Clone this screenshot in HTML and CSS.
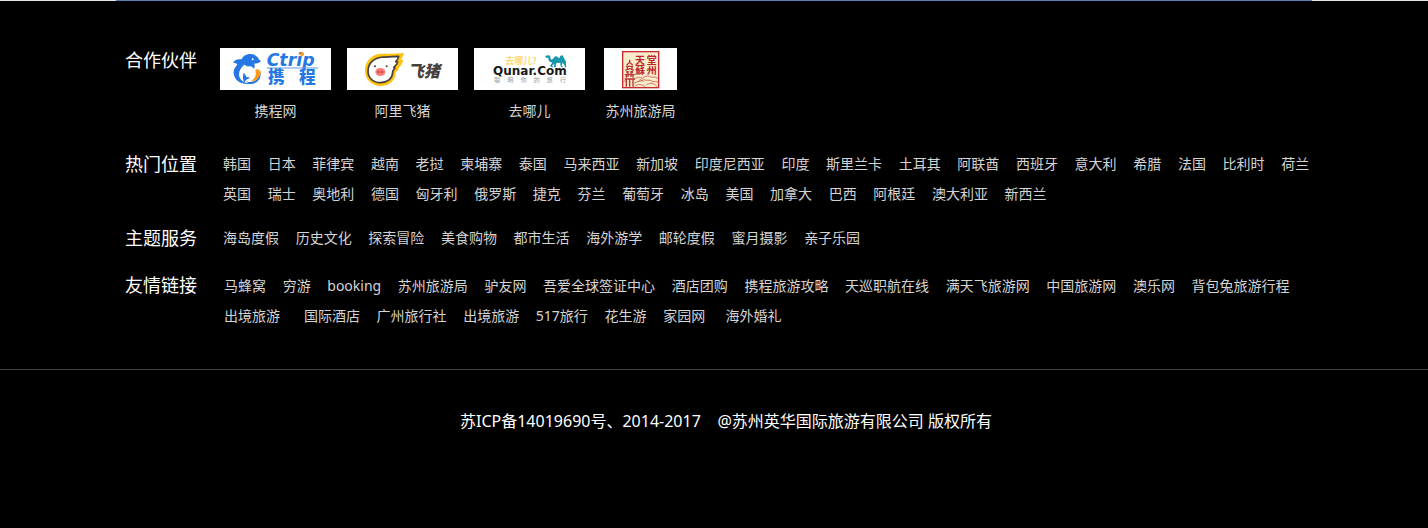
FILE: index.html
```html
<!DOCTYPE html>
<html lang="zh-CN">
<head>
<meta charset="utf-8">
<title>苏州英华国际旅游有限公司</title>
<link rel="stylesheet" href="styles.css">
</head>
<body>
<footer class="footer">
  <div class="topline"><div class="topline-accent"></div></div>
  <div class="container">
    <section class="group partners">
      <h2 class="label">合作伙伴</h2>
      <ul class="logos">
        <li><a class="partner" href="#">
          <svg class="logo" viewBox="15 18 333 126" aria-hidden="true">
            <path fill="#2577e3" d="M54 63 C58 53 68 50 80 52 C84 41 95 36 108 36 C121 37 130 45 132 53 L138 57 C135 63 126 65 117 65 C120 70 120 76 117 80 C113 74 108 71 102 73 C89 77 83 90 85 101 C87 114 96 121 108 120 C123 118 133 106 136 92 C140 108 128 126 104 126 C75 128 58 114 56 94 C55 83 60 76 67 68 C63 63 58 61 54 63Z"/>
            <path fill="#fff" d="M88 68 C73 79 68 97 76 110 C82 119 90 122 99 123 C86 110 82 90 99 74Z"/>
            <path fill="#2577e3" d="M86 92 C90 96 93 99 94 106 C98 104 102 105 105 108 C96 110 91 115 88 122 C83 114 83 102 86 92Z"/>
            <path fill="#ff9816" d="M121 84 C126 79 136 83 137 91 C138 105 121 119 103 119 C117 114 126 102 121 84Z"/>
            <circle cx="113" cy="52" r="3" fill="#fff"/>
            <text class="ctrip-en" x="155" y="71">Ctrip</text>
            <circle cx="261" cy="36" r="6" fill="#ff9816"/>
            <path stroke="#5c9cea" stroke-width="3" d="M155 78H310"/>
            <text class="ctrip-cn" x="159" y="122">携</text>
            <text class="ctrip-cn" x="252" y="122">程</text>
          </svg>
          <span>携程网</span></a></li>
        <li><a class="partner" href="#">
          <svg class="logo" viewBox="15 18 333 126" aria-hidden="true">
            <path fill="#ffc20e" d="M69 88 C67 57 91 33 125 35 C147 36 169 34 186 33 C182 46 180 48 176 53 L184 53 C181 64 176 73 170 78 C171 84 165 87 161 90 C162 115 142 132 115 132 C91 132 70 114 69 88Z"/>
            <path fill="#fff" stroke="#46413d" stroke-width="5" stroke-linejoin="round" d="M78 88 C78 62 97 47 124 45 C140 46 155 43 170 43 C168 51 165 56 161 59 L167 60 C166 67 160 72 155 76 L159 78 C155 84 151 86 152 91 C151 110 136 121 115 122 C94 122 78 108 78 88Z"/>
            <ellipse cx="115" cy="90" rx="15" ry="12" fill="#ff7774"/>
            <circle cx="110" cy="90" r="3" fill="#a3423e"/><circle cx="120" cy="90" r="3" fill="#a3423e"/>
            <circle cx="99" cy="73" r="3" fill="#46413d"/><circle cx="134" cy="73" r="3" fill="#46413d"/>
            <text class="pig-cn" x="197" y="105">飞猪</text>
          </svg>
          <span>阿里飞猪</span></a></li>
        <li><a class="partner" href="#">
          <svg class="logo" viewBox="15 18 333 126" aria-hidden="true">
            <text class="qunar-cn" x="109" y="67">去哪儿?</text>
            <path fill="#1698ad" d="M229 43 C233 38 240 39 244 42 C243 50 246 54 250 52 C255 48 257 41 262 43 C267 45 268 50 271 48 C273 43 277 38 281 41 C284 44 285 49 288 53 C292 58 291 62 291 68 L292 76 L288 76 L286 69 L281 62 L278 69 L282 76 L278 76 L274 70 L274 62 L262 63 L260 76 L255 76 L256 65 L249 71 L253 76 L248 76 L243 71 L250 62 C241 60 237 54 238 47 L230 47Z"/>
            <text class="qunar-en" x="72" y="98">Qunar.Com</text>
            <g class="qunar-tag"><text x="76" y="120">聪</text><text x="115" y="120">明</text><text x="155" y="120">你</text><text x="194" y="120">的</text><text x="233" y="120">旅</text><text x="273" y="120">行</text></g>
          </svg>
          <span>去哪儿</span></a></li>
        <li class="bureau"><a class="partner" href="#">
          <svg class="logo" viewBox="18 18 219 126" aria-hidden="true">
            <rect x="74" y="29" width="108" height="108" fill="#f7edcb" stroke="#c92a2e" stroke-width="4"/>
            <g fill="none" stroke="#bc3534" stroke-width="3">
              <path d="M95 53V64M86 69L95 61L104 69M84 73H106M88 74V81M102 74V81M82 85L95 80L108 85M87 87V94M103 87V94M80 98H110M85 100V107M105 100V107M80 111H111M85 113V134M95 113V134M105 113V134M90 87V105M99 87V105" stroke-width="4"/>
              <path d="M107 112C119 104 125 106 134 109C143 99 154 102 161 106C169 104 177 105 181 112M108 124C118 116 128 120 137 113C146 117 154 112 161 117C170 121 175 117 181 121M76 119C81 115 84 117 87 121M110 134C121 123 132 128 142 134M145 129C157 120 168 124 177 133M122 116C128 111 135 115 137 120" stroke-width="2"/>
            </g>
            <g class="seal"><text x="111" y="65">天</text><text x="146" y="65">堂</text><text x="111" y="97">蘇</text><text x="146" y="97">州</text></g>
          </svg>
          <span>苏州旅游局</span></a></li>
      </ul>
    </section>

    <section class="group places">
      <h2 class="label">热门位置</h2>
      <div class="links">
        <p>
          <a href="#">韩国</a> <a href="#">日本</a> <a href="#">菲律宾</a> <a href="#">越南</a> <a href="#">老挝</a>
          <a href="#">柬埔寨</a> <a href="#">泰国</a> <a href="#">马来西亚</a> <a href="#">新加坡</a> <a href="#">印度尼西亚</a>
          <a href="#">印度</a> <a href="#">斯里兰卡</a> <a href="#">土耳其</a> <a href="#">阿联酋</a> <a href="#">西班牙</a>
          <a href="#">意大利</a> <a href="#">希腊</a> <a href="#">法国</a> <a href="#">比利时</a> <a href="#">荷兰</a>
        </p>
        <p>
          <a href="#">英国</a> <a href="#">瑞士</a> <a href="#">奥地利</a> <a href="#">德国</a> <a href="#">匈牙利</a>
          <a href="#">俄罗斯</a> <a href="#">捷克</a> <a href="#">芬兰</a> <a href="#">葡萄牙</a> <a href="#">冰岛</a>
          <a href="#">美国</a> <a href="#">加拿大</a> <a href="#">巴西</a> <a href="#">阿根廷</a> <a href="#">澳大利亚</a>
          <a href="#">新西兰</a>
        </p>
      </div>
    </section>

    <section class="group services">
      <h2 class="label">主题服务</h2>
      <div class="links">
        <p>
          <a href="#">海岛度假</a> <a href="#">历史文化</a> <a href="#">探索冒险</a> <a href="#">美食购物</a> <a href="#">都市生活</a>
          <a href="#">海外游学</a> <a href="#">邮轮度假</a> <a href="#">蜜月摄影</a> <a href="#">亲子乐园</a>
        </p>
      </div>
    </section>

    <section class="group friends">
      <h2 class="label">友情链接</h2>
      <div class="links">
        <p>
          <a href="#">马蜂窝</a> <a href="#">穷游</a> <a href="#">booking</a> <a href="#">苏州旅游局</a> <a href="#">驴友网</a>
          <a href="#">吾爱全球签证中心</a> <a href="#">酒店团购</a> <a href="#">携程旅游攻略</a> <a href="#">天巡职航在线</a>
          <a href="#">满天飞旅游网</a> <a href="#">中国旅游网</a> <a href="#">澳乐网</a> <a href="#">背包兔旅游行程</a>
        </p>
        <p>
          <a href="#">出境旅游</a>&nbsp;&nbsp; <a href="#">国际酒店</a> <a href="#">广州旅行社</a> <a href="#">出境旅游</a>
          <a href="#">517旅行</a> <a href="#">花生游</a> <a href="#">家园网</a>&nbsp; <a href="#">海外婚礼</a>
        </p>
      </div>
    </section>
  </div>
  <p class="copyright">苏ICP备14019690号、2014-2017 &nbsp;&nbsp; @苏州英华国际旅游有限公司 版权所有</p>
</footer>
</body>
</html>
```
FILE: styles.css
```css
* {
  box-sizing: border-box;
}

body {
  margin: 0;
  background: #000;
  color: #d4d4d4;
  font-family: "Noto Sans", "Noto Sans CJK SC", sans-serif;
  font-size: 14px;
  line-height: 30px;
}

p, h2, ul {
  margin: 0;
  padding: 0;
}

a {
  color: inherit;
  text-decoration: none;
}

a:hover {
  color: #fff;
}

.topline {
  height: 1px;
  background: #e6e6e6;
}

.topline-accent {
  max-width: 1196px;
  height: 1px;
  margin: 0 auto;
  background: #5581b0;
}

.container {
  max-width: 1196px;
  margin: 0 auto;
  padding: 47px 0 38px 9px;
}

.group {
  display: grid;
  grid-template-columns: 98px 1fr;
}

.label {
  color: #fff;
  font-size: 18px;
  font-weight: 400;
  line-height: 30px;
}

.partners {
  grid-template-columns: 95px 1fr;
}

.partners .label {
  line-height: 24px;
}

.logos {
  display: flex;
  gap: 16px;
  list-style: none;
}

.bureau {
  margin-left: 3px;
}

.partner {
  display: flex;
  flex-direction: column;
  align-items: center;
  gap: 6px;
}

.logo {
  display: block;
  height: 42px;
  background: #fff;
}

.places {
  margin-top: 23px;
}

.services {
  margin-top: 14px;
}

.friends {
  grid-template-columns: 99px 1fr;
  margin-top: 18px;
}

.friends .label {
  line-height: 28px;
}

.links a:not(:last-child) {
  margin-right: 13px;
}

.copyright {
  padding: 36px 0 93px 24px;
  border-top: 1px solid #444;
  color: #fff;
  font-size: 16px;
  text-align: center;
}

.ctrip-en {
  fill: #2577e3;
  font: italic 700 52px "DejaVu Sans", sans-serif;
}

.ctrip-cn {
  fill: #2577e3;
  font: 900 50px "Noto Sans CJK SC", sans-serif;
}

.pig-cn {
  fill: #46413d;
  font: italic 900 48px "Noto Sans CJK SC", sans-serif;
}

.qunar-cn {
  fill: #ffd24d;
  font: 500 27px "Noto Sans CJK SC", sans-serif;
}

.qunar-en {
  fill: #1c1818;
  font: 700 36px "DejaVu Sans", sans-serif;
}

.qunar-tag {
  fill: #999;
  font: 400 18px "Noto Sans CJK SC", sans-serif;
}

.seal {
  fill: #bd2428;
  font: 700 30px "Noto Sans CJK SC", sans-serif;
}
```
